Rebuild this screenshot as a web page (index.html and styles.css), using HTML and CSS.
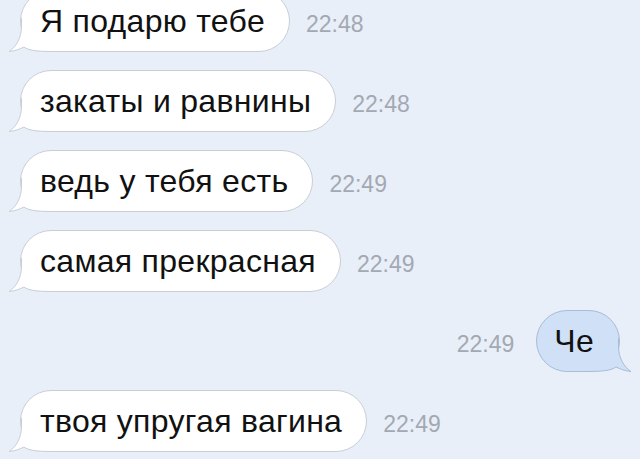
FILE: index.html
```html
<!DOCTYPE html>
<html lang="ru">
<head>
    <meta charset="UTF-8" />
    <meta name="viewport" content="width=device-width, initial-scale=1.0" />
    <title>Сообщения</title>
    <link rel="stylesheet" href="styles.css">
</head>
<body>
    <div class="chat">
        <div class="row">
            <div class="bubble in">
                <svg class="tail" width="44" height="34" viewBox="0 0 44 34">
                    <path class="tail-fill" d="M13,0 L13.5,8 C13.5,20 8,29 1,33.5 C7,33 12,31 16,29 C20,32 27,33.5 44,33.5 L44,0 Z" />
                    <path class="tail-line" d="M13.5,0 L13.5,8 C13.5,20 8,29 1,33.5 C7,33 12,31 16,29 C20,32 27,33.5 44,33.5" />
                </svg>
                <span class="text">Я подарю тебе</span>
            </div>
            <span class="time">22:48</span>
        </div>
        <div class="row">
            <div class="bubble in">
                <svg class="tail" width="44" height="34" viewBox="0 0 44 34">
                    <path class="tail-fill" d="M13,0 L13.5,8 C13.5,20 8,29 1,33.5 C7,33 12,31 16,29 C20,32 27,33.5 44,33.5 L44,0 Z" />
                    <path class="tail-line" d="M13.5,0 L13.5,8 C13.5,20 8,29 1,33.5 C7,33 12,31 16,29 C20,32 27,33.5 44,33.5" />
                </svg>
                <span class="text">закаты и равнины</span>
            </div>
            <span class="time">22:48</span>
        </div>
        <div class="row">
            <div class="bubble in">
                <svg class="tail" width="44" height="34" viewBox="0 0 44 34">
                    <path class="tail-fill" d="M13,0 L13.5,8 C13.5,20 8,29 1,33.5 C7,33 12,31 16,29 C20,32 27,33.5 44,33.5 L44,0 Z" />
                    <path class="tail-line" d="M13.5,0 L13.5,8 C13.5,20 8,29 1,33.5 C7,33 12,31 16,29 C20,32 27,33.5 44,33.5" />
                </svg>
                <span class="text">ведь у тебя есть</span>
            </div>
            <span class="time">22:49</span>
        </div>
        <div class="row">
            <div class="bubble in">
                <svg class="tail" width="44" height="34" viewBox="0 0 44 34">
                    <path class="tail-fill" d="M13,0 L13.5,8 C13.5,20 8,29 1,33.5 C7,33 12,31 16,29 C20,32 27,33.5 44,33.5 L44,0 Z" />
                    <path class="tail-line" d="M13.5,0 L13.5,8 C13.5,20 8,29 1,33.5 C7,33 12,31 16,29 C20,32 27,33.5 44,33.5" />
                </svg>
                <span class="text">самая прекрасная</span>
            </div>
            <span class="time">22:49</span>
        </div>
        <div class="row out">
            <span class="time">22:49</span>
            <div class="bubble mine">
                <svg class="tail" width="44" height="34" viewBox="0 0 44 34">
                    <path class="tail-fill" d="M13,0 L13.5,8 C13.5,20 8,29 1,33.5 C7,33 12,31 16,29 C20,32 27,33.5 44,33.5 L44,0 Z" />
                    <path class="tail-line" d="M13.5,0 L13.5,8 C13.5,20 8,29 1,33.5 C7,33 12,31 16,29 C20,32 27,33.5 44,33.5" />
                </svg>
                <span class="text">Че</span>
            </div>
        </div>
        <div class="row">
            <div class="bubble in">
                <svg class="tail" width="44" height="34" viewBox="0 0 44 34">
                    <path class="tail-fill" d="M13,0 L13.5,8 C13.5,20 8,29 1,33.5 C7,33 12,31 16,29 C20,32 27,33.5 44,33.5 L44,0 Z" />
                    <path class="tail-line" d="M13.5,0 L13.5,8 C13.5,20 8,29 1,33.5 C7,33 12,31 16,29 C20,32 27,33.5 44,33.5" />
                </svg>
                <span class="text">твоя упругая вагина</span>
            </div>
            <span class="time">22:49</span>
        </div>
    </div>
</body>
</html>
```

FILE: styles.css
```css
body {
    margin: 0;
    background-color: #e9eff8;
    font-family: "Liberation Sans", Arial, sans-serif;
    overflow: hidden;
}

.chat {
    display: flex;
    flex-direction: column;
    gap: 18px;
    margin-top: -10px;
    padding: 0 20px;
}

.row {
    display: flex;
    align-items: baseline;
    gap: 16px;
}

.row.out {
    justify-content: flex-end;
    gap: 22px;
}

.bubble {
    position: relative;
    height: 62px;
    box-sizing: border-box;
    padding: 0 24px 0 19px;
    border-radius: 31px;
    font-size: 32px;
    letter-spacing: 0.3px;
    line-height: 60px;
    color: #111;
}

.text {
    position: relative;
}

.bubble.in {
    background-color: #fff;
    border: 1px solid #c9ced6;
}

.bubble.mine {
    background-color: #cfe0f7;
    border: 1px solid #a9bcd6;
    padding: 0 25px 0 17px;
}

.tail {
    position: absolute;
    left: -13px;
    bottom: -1px;
    display: block;
}

.bubble.mine .tail {
    left: auto;
    right: -13px;
    transform: scaleX(-1);
}

.tail-fill {
    fill: #fff;
}

.tail-line {
    fill: none;
    stroke: #c9ced6;
    stroke-width: 1;
}

.bubble.mine .tail-fill {
    fill: #cfe0f7;
}

.bubble.mine .tail-line {
    stroke: #a9bcd6;
}

.time {
    font-size: 23px;
    color: #a3a9b3;
}
```
